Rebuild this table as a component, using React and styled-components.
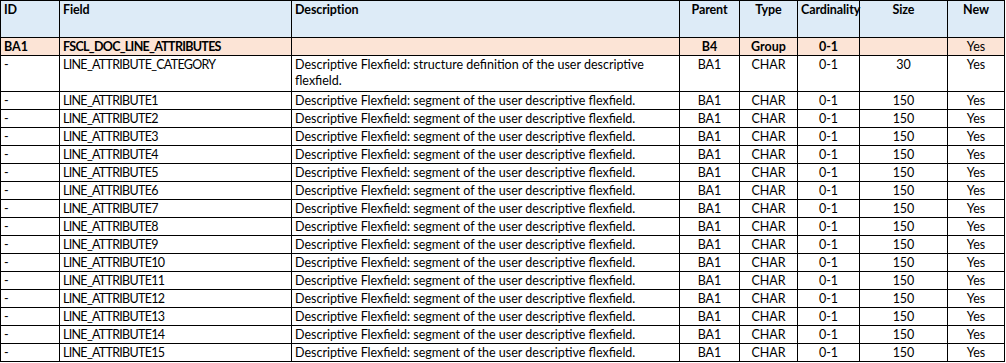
import React from "react";
import styled, { createGlobalStyle } from "styled-components";

const GlobalStyle = createGlobalStyle`
  html, body {
    margin: 0;
    padding: 0;
    background: #ffffff;
  }
`;

const columns = [
  { key: "id", label: "ID", width: 59, align: "left" },
  { key: "field", label: "Field", width: 232, align: "left", tight: true },
  { key: "desc", label: "Description", width: 388, align: "left" },
  { key: "parent", label: "Parent", width: 60, align: "center" },
  { key: "type", label: "Type", width: 58, align: "center" },
  { key: "card", label: "Cardinality", width: 62, align: "center" },
  { key: "size", label: "Size", width: 88, align: "center" },
  { key: "isNew", label: "New", width: 57, align: "center" },
];

const segment = "Descriptive Flexfield: segment of the user descriptive flexfield.";

const rows = [
  {
    id: "-",
    field: "LINE_ATTRIBUTE_CATEGORY",
    desc: "Descriptive Flexfield: structure definition of the user descriptive flexfield.",
    parent: "BA1",
    type: "CHAR",
    card: "0-1",
    size: "30",
    isNew: "Yes",
    tall: true,
  },
  ...Array.from({ length: 15 }, (_, i) => ({
    id: "-",
    field: `LINE_ATTRIBUTE${i + 1}`,
    desc: segment,
    parent: "BA1",
    type: "CHAR",
    card: "0-1",
    size: "150",
    isNew: "Yes",
  })),
];

function App() {
  return (
    <>
      <GlobalStyle />
      <Sheet>
        <colgroup>
          {columns.map((c) => (
            <col key={c.key} style={{ width: c.width }} />
          ))}
        </colgroup>
        <thead>
          <HeadRow>
            {columns.map((c) => (
              <HeadCell key={c.key} $align={c.align}>
                {c.label}
              </HeadCell>
            ))}
          </HeadRow>
        </thead>
        <tbody>
          <GroupRow>
            <Cell $bold>BA1</Cell>
            <Cell $bold $tight>FSCL_DOC_LINE_ATTRIBUTES</Cell>
            <Cell />
            <Cell $align="center" $bold>B4</Cell>
            <Cell $align="center" $bold>Group</Cell>
            <Cell $align="center" $bold>0-1</Cell>
            <Cell $align="center" />
            <Cell $align="center">Yes</Cell>
          </GroupRow>
          {rows.map((r) => (
            <Row key={r.field} $tall={r.tall}>
              {columns.map((c) => (
                <Cell key={c.key} $align={c.align} $tight={c.tight}>
                  {r[c.key]}
                </Cell>
              ))}
            </Row>
          ))}
        </tbody>
      </Sheet>
    </>
  );
}

export default App;

const Sheet = styled.table`
  border-collapse: collapse;
  table-layout: fixed;
  width: 1005px;
  font-family: "Lato", "Liberation Sans", sans-serif;
  font-size: 12.5px;
  color: #000000;
`;

const HeadRow = styled.tr`
  height: 37px;
  background: #ddebf7;
`;

const GroupRow = styled.tr`
  height: 18px;
  background: #fce4d6;
`;

const Row = styled.tr`
  height: ${(p) => (p.$tall ? "36px" : "18px")};
  background: #ffffff;
`;

const HeadCell = styled.th`
  border: 1px solid #000000;
  padding: 1px 3px 0;
  vertical-align: top;
  text-align: ${(p) => p.$align};
  font-weight: 700;
  line-height: 16px;
  white-space: nowrap;
  overflow: visible;
  letter-spacing: -0.1px;
`;

const Cell = styled.td`
  border: 1px solid #000000;
  padding: 1px 3px 0;
  vertical-align: top;
  text-align: ${(p) => p.$align || "left"};
  font-weight: ${(p) => (p.$bold ? 700 : 400)};
  letter-spacing: ${(p) => (p.$tight ? "-0.7px" : "0")};
  line-height: 16px;
  overflow: hidden;
`;
